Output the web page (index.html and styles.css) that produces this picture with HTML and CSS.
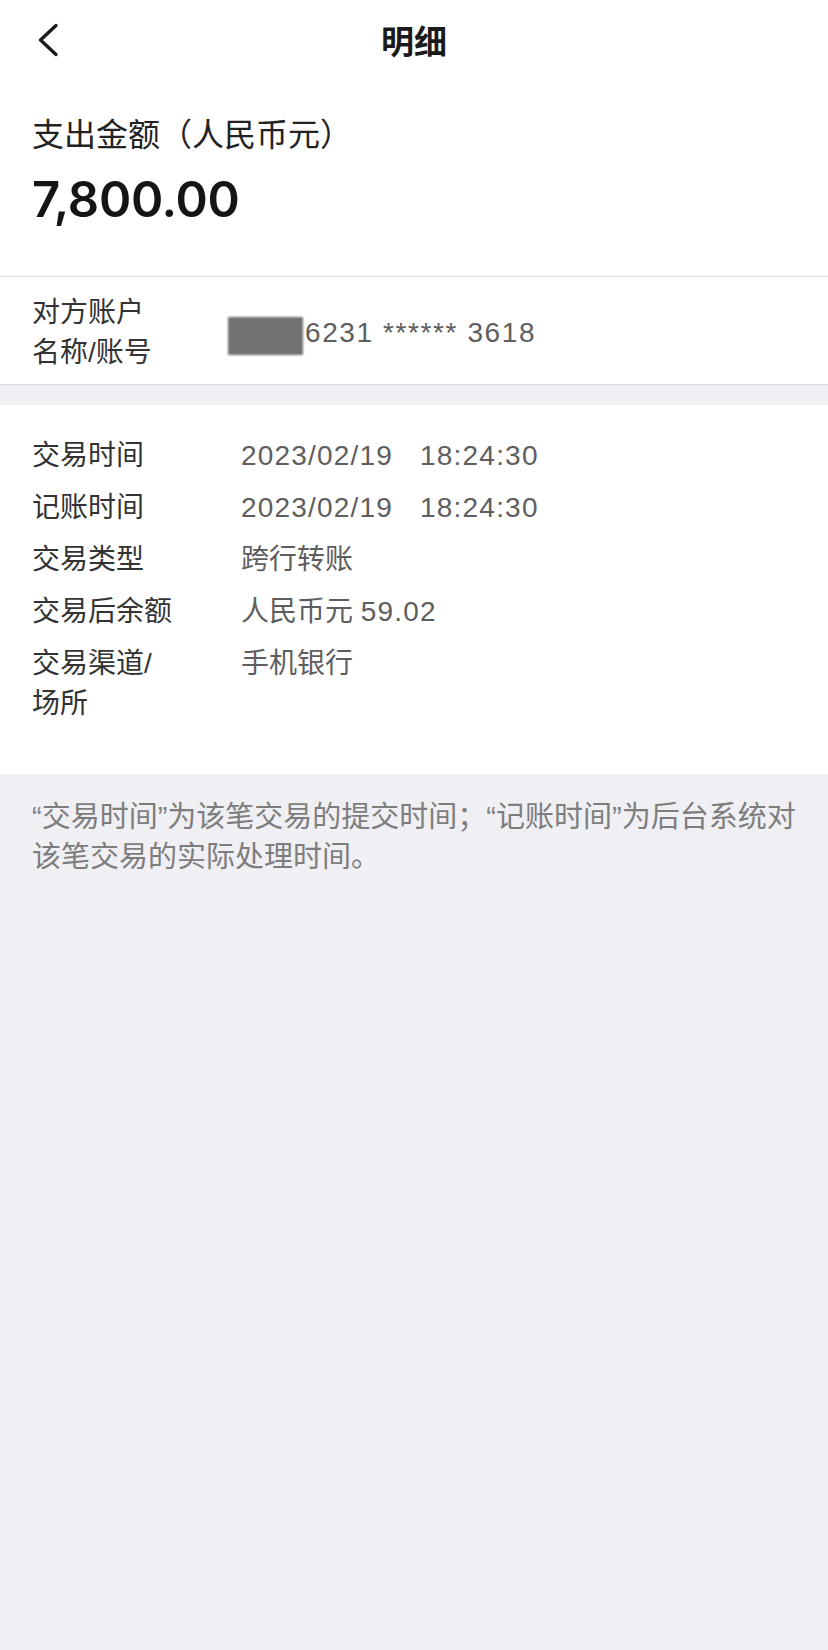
FILE: index.html
```html
<!DOCTYPE html>
<html lang="zh-CN">
<head>
<meta charset="utf-8">
<title>明细</title>
<link rel="stylesheet" href="styles.css">
</head>
<body>
<div class="page">
  <header class="nav">
    <div class="nav-left">
      <svg class="back" width="24" height="34" viewBox="0 0 24 34" aria-hidden="true">
        <polyline points="19,2.5 3.5,17 19,31.5" fill="none" stroke="#1c1c1c" stroke-width="3.4" stroke-linecap="round" stroke-linejoin="round"/>
      </svg>
    </div>
    <h1 class="nav-title">明细</h1>
    <div class="nav-right"></div>
  </header>

  <section class="summary">
    <div class="summary-label">支出金额（人民币元）</div>
    <div class="summary-amount">7,800.00</div>
  </section>

  <section class="account">
    <div class="account-label">对方账户<br>名称/账号</div>
    <div class="account-value">
      <span class="redact"></span>
      <span class="num acct">6231 ****** 3618</span>
    </div>
  </section>

  <div class="spacer"></div>

  <section class="details">
    <div class="row"><div class="label">交易时间</div><div class="value num">2023/02/19&nbsp;&nbsp;&nbsp;18:24:30</div></div>
    <div class="row"><div class="label">记账时间</div><div class="value num">2023/02/19&nbsp;&nbsp;&nbsp;18:24:30</div></div>
    <div class="row"><div class="label">交易类型</div><div class="value">跨行转账</div></div>
    <div class="row"><div class="label">交易后余额</div><div class="value">人民币元 <span class="num">59.02</span></div></div>
    <div class="row"><div class="label">交易渠道/场所</div><div class="value">手机银行</div></div>
  </section>

  <p class="note">“交易时间”为该笔交易的提交时间；“记账时间”为后台系统对该笔交易的实际处理时间。</p>
</div>
</body>
</html>
```

FILE: styles.css
```css
html, body {
  margin: 0;
  padding: 0;
}
body {
  background: #efeff4;
  font-family: "Liberation Sans", "Noto Sans CJK SC", sans-serif;
  color: #222;
}
.page {
  width: 828px;
  min-height: 1650px;
}
.nav {
  height: 80px;
  background: #fff;
  display: grid;
  grid-template-columns: 1fr auto 1fr;
  align-items: center;
}
.nav-left {
  padding-left: 37px;
  display: flex;
  align-items: center;
}
.back {
  display: block;
}
.nav-title {
  margin: 0;
  font-size: 33px;
  font-weight: 600;
  color: #1a1a1a;
  line-height: 40px;
  font-family: "Noto Sans CJK SC", sans-serif;
}
.summary {
  background: #fff;
  padding: 32px 32px 46px;
}
.summary-label {
  font-size: 32px;
  line-height: 40px;
  color: #222;
  font-family: "Noto Sans CJK SC", sans-serif;
}
.summary-amount {
  margin-top: 18px;
  font-family: "Inter", "Liberation Sans", sans-serif;
  font-size: 49px;
  line-height: 60px;
  font-weight: 600;
  letter-spacing: -0.3px;
  color: #151515;
}
.account {
  background: #fff;
  border-top: 1px solid #dcdcdc;
  border-bottom: 1px solid #dcdcdc;
  padding: 16px 32px 11px;
  display: flex;
  align-items: center;
}
.account-label {
  width: 196px;
  font-size: 28px;
  line-height: 40px;
  color: #333;
}
.account-value {
  display: flex;
  align-items: center;
  gap: 2px;
  font-size: 28px;
  color: #5e5e5e;
}
.redact {
  display: block;
  width: 75px;
  height: 38px;
  margin-top: 6px;
  background: #727272;
  filter: blur(0.8px);
}
.num {
  letter-spacing: 1.2px;
}
.acct {
  letter-spacing: 1.6px;
}
.spacer {
  height: 20px;
}
.details {
  background: #fff;
  padding: 31px 32px 50px;
  display: flex;
  flex-direction: column;
  gap: 12px;
}
.row {
  display: grid;
  grid-template-columns: 144px 1fr;
  column-gap: 65px;
  font-size: 28px;
  line-height: 40px;
}
.label {
  color: #333;
}
.value {
  color: #5e5e5e;
}
.note {
  margin: 0;
  padding: 23px 24px 0 32px;
  font-size: 29px;
  line-height: 40px;
  color: #7d7d7d;
}
```
